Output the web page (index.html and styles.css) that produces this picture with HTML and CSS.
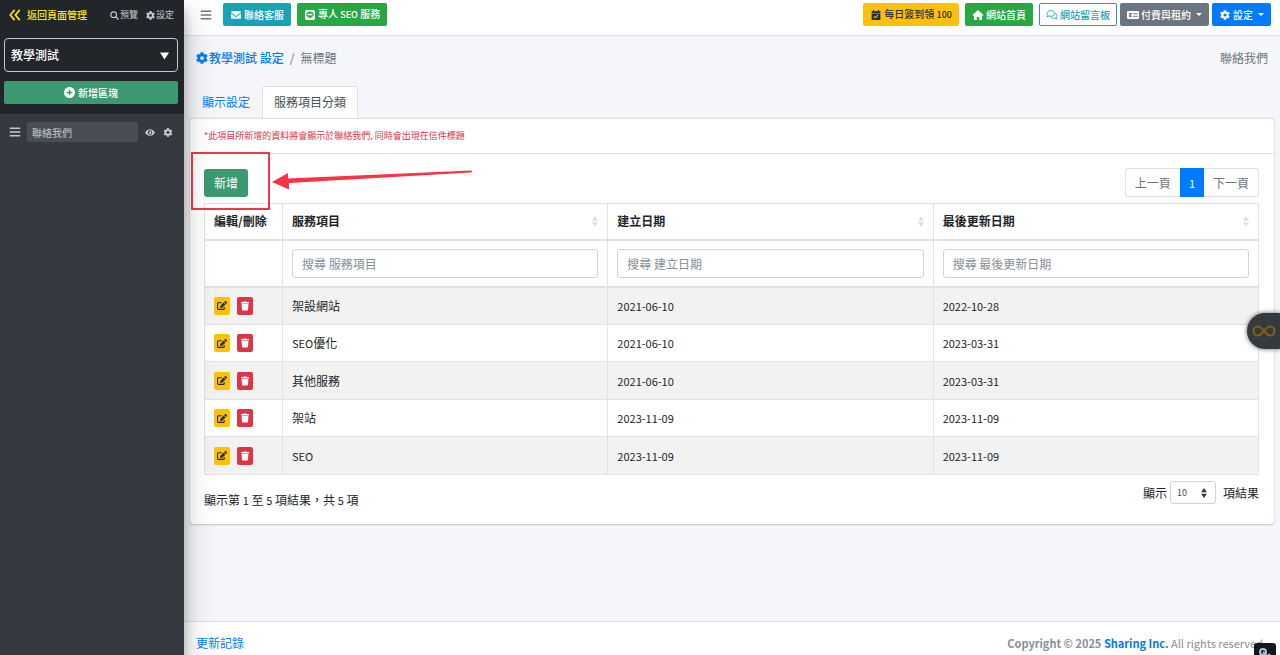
FILE: index.html
```html
<!DOCTYPE html>
<html lang="zh-Hant">
<head>
<meta charset="utf-8">
<title>聯絡我們</title>
<link rel="stylesheet" href="styles.css">
</head>
<body>
<svg class="sprite" aria-hidden="true">
  <symbol id="gear" viewBox="0 0 512 512"><path d="M487 316l-43-25c4-23 4-47 0-70l43-25c5-3 7-9 6-14-11-36-30-69-55-95-4-4-10-5-15-2l-43 24c-18-15-39-27-61-35V25c0-6-4-11-9-12-37-8-75-8-110 0-6 1-10 6-10 12v49c-22 8-43 20-61 35L86 85c-5-3-11-2-15 2-25 27-44 60-55 95-2 5 1 11 6 14l42 25c-4 23-4 47 0 70l-42 25c-5 3-8 9-6 14 11 35 30 68 55 95 4 4 10 5 15 2l43-24c18 15 39 27 61 35v49c0 6 4 11 10 12 36 8 74 8 110 0 5-1 9-6 9-12v-49c22-8 43-20 61-35l43 24c5 3 11 2 15-2 25-27 44-60 55-95 1-5-1-11-6-14zM256 336a80 80 0 1 1 0-160 80 80 0 0 1 0 160z"/></symbol>
  <symbol id="edit" viewBox="0 0 18 16"><path d="M8.500 3H2.700A1.700 1.700 0 0 0 1 4.700v8.600A1.700 1.700 0 0 0 2.700 15h8.600a1.700 1.700 0 0 0 1.700-1.700V10.500" fill="none" stroke="currentColor" stroke-width="2"/><path d="M14.200.5a1.400 1.400 0 0 1 2 0l1.300 1.300a1.400 1.400 0 0 1 0 2l-1.400 1.400-3.300-3.300zM12 2.700L15.300 6l-6.200 6.200-3.600.5.400-3.700z"/></symbol>
  <symbol id="trash" viewBox="0 0 14 16"><path d="M0 1h4l.7-1h4.600L10 1h4v2H0zM1 4h12l-.7 10.600A1.500 1.500 0 0 1 10.800 16H3.200a1.500 1.500 0 0 1-1.500-1.400z"/></symbol>
  <symbol id="bars" viewBox="0 0 16 16"><path d="M1 2h14v2H1zM1 7h14v2H1zM1 12h14v2H1z"/></symbol>
  <symbol id="sort" viewBox="0 0 8 14"><path d="M4 0l4 6H0zM0 8h8l-4 6z"/></symbol>
</svg>

<div class="app">
  <aside class="sidebar">
    <div class="side-top">
      <nav class="side-nav">
        <a class="back" href="#"><svg viewBox="0 0 14 14"><path d="M6.500 1L1.500 7l5 6M12.500 1l-5 6 5 6" fill="none" stroke="currentColor" stroke-width="2"/></svg>返回頁面管理</a>
        <a class="side-link" href="#"><svg viewBox="0 0 16 16"><circle cx="6.500" cy="6.500" r="5" fill="none" stroke="currentColor" stroke-width="2"/><path d="M10 10l5 5" stroke="currentColor" stroke-width="2.500"/></svg>預覽</a>
        <a class="side-link" href="#"><svg><use href="#gear"/></svg>設定</a>
      </nav>
      <div class="site-select">
        <select aria-label="頁面"><option>教學測試</option></select>
        <svg viewBox="0 0 10 8"><path d="M0 0h10L5 8z"/></svg>
      </div>
      <button class="add-block"><svg viewBox="0 0 16 16"><path fill-rule="evenodd" d="M8 0a8 8 0 1 0 0 16A8 8 0 0 0 8 0zM7 4h2v3h3v2H9v3H7V9H4V7h3z"/></svg>新增區塊</button>
    </div>
    <div class="block-row">
      <svg class="drag"><use href="#bars"/></svg>
      <input type="text" value="聯絡我們" aria-label="區塊名稱">
      <button aria-label="顯示"><svg viewBox="0 0 18 14"><path fill-rule="evenodd" d="M9 1C5 1 2 3.500 0 7c2 3.500 5 6 9 6s7-2.500 9-6c-2-3.500-5-6-9-6zm0 2a4 4 0 1 1 0 8 4 4 0 0 1 0-8z"/><path d="M9 4.500a2.500 2.500 0 1 1-2.500 2.500C8 7.500 9 6.500 9 4.500z"/></svg></button>
      <button aria-label="區塊設定"><svg><use href="#gear"/></svg></button>
    </div>
  </aside>

  <div class="main">
    <header class="topbar">
      <button class="menu" aria-label="選單"><svg><use href="#bars"/></svg></button>
      <a class="btn info" href="#"><svg viewBox="0 0 16 16"><path d="M0 3.500A1.500 1.500 0 0 1 1.500 2h13A1.500 1.500 0 0 1 16 3.500L8 9.500 0 3.500zM0 5.500l8 6 8-6v7a1.500 1.500 0 0 1-1.500 1.500h-13A1.500 1.500 0 0 1 0 12.500z"/></svg>聯絡客服</a>
      <a class="btn success" href="#"><svg viewBox="0 0 16 16"><path fill-rule="evenodd" d="M3 0h10a3 3 0 0 1 3 3v10a3 3 0 0 1-3 3H3a3 3 0 0 1-3-3V3a3 3 0 0 1 3-3zm5 2.500C4.700 2.500 2 4.600 2 7.200c0 2.400 2 4.200 5 4.700v2c3.500-1.600 7-4 7-6.700 0-2.600-2.700-4.700-6-4.700z"/><path d="M4 6h8v2.500H4z"/></svg><span>專人 <small>SEO</small> 服務</span></a>
      <div class="top-right">
        <a class="btn warning" href="#"><svg viewBox="0 0 16 16"><path fill-rule="evenodd" d="M3 0h2v2h6V0h2v2h2v3H1V2h2zM1 6h14v10H1zm9.800 1.500L7 11.300 5.200 9.500 4 10.700l3 3 5-5z"/></svg><span>每日簽到領 <small>100</small></span></a>
        <a class="btn success" href="#"><svg viewBox="0 0 18 16"><path d="M9 0l9 8-1.200 1.300L15.500 8.200V15a1 1 0 0 1-1 1H11v-5H7v5H3.500a1 1 0 0 1-1-1V8.200L1.200 9.300 0 8z"/></svg>網站首頁</a>
        <a class="btn outline" href="#"><svg viewBox="0 0 18 16"><g fill="none" stroke="currentColor" stroke-width="1.400"><path d="M7 1c3.400 0 6 2 6 4.500S10.400 10 7 10c-1 0-1.800-.1-2.600-.4L1 11c.7-.8 1.100-1.600 1.200-2.500C1.400 7.700 1 6.600 1 5.500 1 3 3.600 1 7 1z"/><path d="M14 5.500c1.800.6 3 2 3 3.800 0 1-.4 1.800-1.100 2.500.1 1 .5 1.700 1.100 2.500l-3.200-1.200c-3 .8-5.800-.2-7-2.300"/></g></svg>網站留言板</a>
        <button class="btn secondary"><svg viewBox="0 0 18 14"><path fill-rule="evenodd" d="M1.500 1h15A1.500 1.500 0 0 1 18 2.500v9a1.500 1.500 0 0 1-1.500 1.500h-15A1.500 1.500 0 0 1 0 11.500v-9A1.500 1.500 0 0 1 1.500 1zM3 4v2h1.500v1H3v3h4V8H5.500V7H7V4zm6 .5V6h7V4.500zM9 8v1.500h7V8z"/></svg>付費與租約<i class="caret"></i></button>
        <button class="btn primary"><svg><use href="#gear"/></svg>設定<i class="caret"></i></button>
      </div>
    </header>

    <main class="content">
      <div class="crumbs">
        <a href="#"><svg><use href="#gear"/></svg>教學測試 設定</a><span class="slash">/</span><span>無標題</span>
        <span class="page-name">聯絡我們</span>
      </div>
      <nav class="tabs">
        <a href="#">顯示設定</a>
        <a class="active" href="#">服務項目分類</a>
      </nav>
      <section class="card">
        <p class="notice">*此項目所新增的資料將會顯示於聯絡我們, 同時會出現在信件標題</p>
        <div class="card-body">
          <div class="toolbar">
            <div class="add-wrap">
              <button class="add">新增</button>
              <div class="mark"></div>
              <svg class="arrow" viewBox="0 0 200 22"><path d="M199 1.500a1 1 0 0 1 0 2L17 14v6.500L0 13 16 4v5.500z"/></svg>
            </div>
            <nav class="pager"><a href="#">上一頁</a><a class="current" href="#">1</a><a href="#">下一頁</a></nav>
          </div>
          <table>
            <thead>
              <tr><th class="ops">編輯/刪除</th><th><div class="head">服務項目<svg><use href="#sort"/></svg></div></th><th><div class="head">建立日期<svg><use href="#sort"/></svg></div></th><th><div class="head">最後更新日期<svg><use href="#sort"/></svg></div></th></tr>
              <tr class="filters"><td></td><td><input type="text" placeholder="搜尋 服務項目" aria-label="搜尋 服務項目"></td><td><input type="text" placeholder="搜尋 建立日期" aria-label="搜尋 建立日期"></td><td><input type="text" placeholder="搜尋 最後更新日期" aria-label="搜尋 最後更新日期"></td></tr>
            </thead>
            <tbody>
              <tr><td><div class="actions"><button class="edit" aria-label="編輯"><svg><use href="#edit"/></svg></button><button class="del" aria-label="刪除"><svg><use href="#trash"/></svg></button></div></td><td>架設網站</td><td class="latin">2021-06-10</td><td class="latin">2022-10-28</td></tr>
              <tr><td><div class="actions"><button class="edit" aria-label="編輯"><svg><use href="#edit"/></svg></button><button class="del" aria-label="刪除"><svg><use href="#trash"/></svg></button></div></td><td><span class="latin">SEO</span>優化</td><td class="latin">2021-06-10</td><td class="latin">2023-03-31</td></tr>
              <tr><td><div class="actions"><button class="edit" aria-label="編輯"><svg><use href="#edit"/></svg></button><button class="del" aria-label="刪除"><svg><use href="#trash"/></svg></button></div></td><td>其他服務</td><td class="latin">2021-06-10</td><td class="latin">2023-03-31</td></tr>
              <tr><td><div class="actions"><button class="edit" aria-label="編輯"><svg><use href="#edit"/></svg></button><button class="del" aria-label="刪除"><svg><use href="#trash"/></svg></button></div></td><td>架站</td><td class="latin">2023-11-09</td><td class="latin">2023-11-09</td></tr>
              <tr><td><div class="actions"><button class="edit" aria-label="編輯"><svg><use href="#edit"/></svg></button><button class="del" aria-label="刪除"><svg><use href="#trash"/></svg></button></div></td><td class="latin">SEO</td><td class="latin">2023-11-09</td><td class="latin">2023-11-09</td></tr>
            </tbody>
          </table>
          <div class="table-foot">
            <span class="summary">顯示第 <span class="latin">1</span> 至 <span class="latin">5</span> 項結果，共 <span class="latin">5</span> 項</span>
            <label class="length">顯示<span class="length-box"><select><option>10</option></select><svg><use href="#sort"/></svg></span>項結果</label>
          </div>
        </div>
      </section>
    </main>

    <footer class="footer">
      <a href="#">更新記錄</a>
      <div class="copy"><b>Copyright © 2025 <a href="#">Sharing Inc.</a></b> All rights reserved.</div>
    </footer>
  </div>
</div>
<button class="float-tab" aria-label="快捷工具"><svg viewBox="0 0 24 12"><path fill="none" stroke="currentColor" stroke-width="2.200" d="M12 6C9.500 3 8.200 1.500 6 1.500a4.500 4.500 0 0 0 0 9c2.200 0 3.500-1.500 6-4.500s3.800-4.500 6-4.500a4.500 4.500 0 0 1 0 9c-2.200 0-3.500-1.500-6-4.500z"/></svg></button>
<button class="corner" aria-label="連結"><svg viewBox="0 0 14 14"><g fill="none" stroke="currentColor" stroke-width="2"><circle cx="5" cy="5" r="3"/><path d="M5 5l6 6M12 7l-5 5"/></g></svg></button>
</body>
</html>
```
FILE: styles.css
```css
* { box-sizing: border-box; }
body {
  margin: 0;
  overflow: hidden;
  font: 12px/18px "Noto Sans CJK TC", sans-serif;
  color: #212529;
  background: #f4f6f9;
}
a { color: #007bff; text-decoration: none; }
button, input, select { font: inherit; color: inherit; margin: 0; padding: 0; border: 0; }
button { cursor: pointer; background: none; }
select { appearance: none; }
svg { fill: currentColor; flex: none; }
.sprite { position: absolute; width: 0; height: 0; }
.latin { font-size: 11px; }

.app { display: flex; height: 100vh; }

/* Sidebar */
.sidebar {
  flex: 0 0 184px;
  min-width: 0;
  z-index: 1;
  background: #343a40;
  color: #c2c7d0;
  box-shadow: 0 14px 28px rgba(0, 0, 0, .25), 0 10px 10px rgba(0, 0, 0, .22);
}
.side-top { background: #22252a; padding: 0 6px 10px 4px; border-bottom: 1px solid #3d4349; }
.side-nav { display: flex; align-items: center; height: 38px; padding: 0 4px 8px 5px; gap: 8px; white-space: nowrap; }
.side-nav a { display: flex; align-items: center; }
.side-nav .back { color: #fce21b; font-size: 10px; font-weight: 500; gap: 6px; margin-right: auto; }
.back svg { width: 12px; height: 12px; }
.side-nav .side-link { color: #c2c7d0; font-size: 9px; }
.side-link svg { width: 9px; height: 9px; margin-right: 1px; }
.site-select { position: relative; }
.site-select select {
  display: block;
  width: 100%;
  height: 34px;
  padding: 0 6px;
  font-weight: 500;
  color: #fff;
  background: #22252a;
  border: 1px solid #c2c7d0;
  border-radius: 4px;
}
.site-select svg { position: absolute; right: 9px; top: 14px; width: 9px; height: 8px; color: #fff; pointer-events: none; }
.add-block {
  display: flex;
  align-items: center;
  justify-content: center;
  gap: 3px;
  width: 100%;
  height: 23px;
  margin-top: 9px;
  font-size: 10px;
  font-weight: 500;
  color: #fff;
  background: #3d9970;
  border-radius: 2px;
}
.add-block svg { width: 11px; height: 11px; }
.block-row { display: flex; align-items: center; padding: 7px 11px 0 9px; }
.block-row .drag { width: 12px; height: 14px; margin-right: 6px; }
.block-row input {
  flex: 1;
  min-width: 0;
  height: 20px;
  padding: 0 5px;
  margin-right: 7px;
  font-size: 10px;
  background: #494e54;
  border-radius: 2px;
}
.block-row button { display: flex; }
.block-row button + button { margin-left: 8px; }
.block-row button svg { width: 10px; height: 9px; }

/* Top bar */
.main { flex: 1; min-width: 0; display: flex; flex-direction: column; }
.topbar {
  display: flex;
  align-items: center;
  gap: 6px;
  height: 36px;
  padding: 0 9px 6px 16px;
  background: #fff;
  border-bottom: 1px solid #dee2e6;
}
.menu { display: flex; color: #6c757d; margin-right: 5px; }
.menu svg { width: 12px; height: 12px; }
.btn {
  display: flex;
  align-items: center;
  gap: 2px;
  height: 23px;
  padding: 0 6px;
  font-size: 10px;
  font-weight: 500;
  white-space: nowrap;
  color: #fff;
  border: 1px solid transparent;
  border-radius: 2px;
}
.btn small { font-size: 9px; }
.btn svg { width: 12px; height: 10px; }
.top-right { display: flex; gap: 6px; margin-left: auto; }
.info { background: #17a2b8; }
.success { background: #28a745; }
.warning { background: #ffc107; color: #1f2d3d; }
.outline { color: #17a2b8; border-color: #17a2b8; }
.secondary { background: #6c757d; margin-left: -3px; }
.primary { background: #007bff; margin-left: -3px; }
.caret { border: 3px solid transparent; border-top-color: currentColor; border-bottom: 0; margin-left: 3px; }

/* Page content */
.content { flex: 1; padding: 0 6px; }
.crumbs { display: flex; align-items: center; height: 44px; padding: 0 6px; color: #6c757d; }
.crumbs a { display: flex; align-items: center; gap: 1px; font-weight: 500; }
.crumbs svg { width: 12px; height: 12px; }
.slash { margin: 0 6px; }
.page-name { margin-left: auto; }
.tabs { display: flex; margin-top: 6px; }
.tabs a { height: 32px; padding: 6px 11px; border: 1px solid transparent; border-bottom: 0; border-radius: 3px 3px 0 0; }
.tabs .active { position: relative; color: #495057; background: #fff; border-color: #dee2e6; margin-bottom: -1px; }
.card {
  background: #fff;
  border-top: 1px solid #dee2e6;
  border-radius: 3px;
  box-shadow: 0 0 1px rgba(0, 0, 0, .25), 0 1px 2px rgba(0, 0, 0, .2);
}
.notice { margin: 0; padding: 8px 14px; font-size: 9px; color: #dc3545; border-bottom: 1px solid #dfe2e5; }
.card-body { padding: 14px 15px 15px 14px; }
.toolbar { display: flex; justify-content: space-between; align-items: center; margin-bottom: 6px; }
.add-wrap { position: relative; }
.add { display: block; height: 28px; padding: 0 10px; color: #fff; background: #3d9970; border-radius: 3px; }
.mark { position: absolute; left: -13px; top: -17px; width: 79px; height: 58px; border: 2px solid #f0384a; }
.arrow { position: absolute; left: 68px; top: 0; width: 200px; height: 22px; color: #f63444; }
.pager { display: flex; }
.pager a { height: 29px; padding: 5px 9px; color: #6c757d; border: 1px solid #dee2e6; }
.pager a:first-child { border-radius: 3px 0 0 3px; border-right: 0; }
.pager a:last-child { border-radius: 0 3px 3px 0; border-left: 0; }
.pager .current { padding: 5px 8px; font-size: 11px; color: #fff; background: #007bff; border-color: #007bff; }

table { width: 100%; table-layout: fixed; border-collapse: collapse; }
th, td { padding: 0 9px; border: 1px solid #dee2e6; text-align: left; }
thead th { height: 36px; border-bottom-width: 2px; }
.ops { width: 78px; white-space: nowrap; }
.head { display: flex; align-items: center; justify-content: space-between; }
.head svg { width: 6px; height: 13px; color: #dcdee0; }
.filters td { height: 47px; border-bottom-width: 2px; }
.filters td input { display: block; width: 100%; height: 29px; padding: 0 9px; border: 1px solid #ced4da; border-radius: 3px; }
input::placeholder { color: #868e96; opacity: 1; }
tbody td { height: 38px; }
tbody tr:nth-child(even) td { height: 37px; }
tbody tr:nth-child(odd) { background: #f2f2f2; }
.actions { display: flex; gap: 7px; }
.actions button { display: grid; place-items: center; width: 16px; height: 18px; border-radius: 2px; }
.edit { background: #ffc107; color: #1f2d3d; }
.edit svg { width: 10px; height: 9px; }
.del { background: #dc3545; color: #fff; }
.del svg { width: 8px; height: 10px; }
.table-foot { display: flex; justify-content: space-between; align-items: flex-start; padding-top: 6px; }
.summary { padding-top: 10px; }
.length { display: flex; align-items: center; }
.length-box { position: relative; margin: 0 7px 0 3px; }
.length select { display: block; width: 46px; height: 23px; padding: 0 6px; font-size: 9px; color: #495057; border: 1px solid #ced4da; border-radius: 3px; background: #fff; }
.length svg { position: absolute; right: 9px; top: 7px; width: 6px; height: 10px; color: #343a40; pointer-events: none; }

.footer {
  display: flex;
  justify-content: space-between;
  height: 34px;
  padding: 12px 14px 0 12px;
  color: #869099;
  background: #fff;
  border-top: 1px solid #dee2e6;
}
.copy { font-size: 11px; }

/* Floating controls */
.float-tab {
  position: fixed;
  right: 0;
  top: 313px;
  z-index: 2;
  display: flex;
  align-items: center;
  width: 33px;
  height: 36px;
  padding-left: 5px;
  color: #806016;
  background: #343a40;
  border-radius: 18px 0 0 18px;
  box-shadow: 0 0 5px rgba(0, 0, 0, .6);
}
.float-tab svg { width: 24px; height: 12px; }
.corner {
  position: fixed;
  right: 4px;
  bottom: -8px;
  z-index: 2;
  width: 22px;
  height: 20px;
  padding: 4px;
  color: #9fc3e0;
  background: #15181b;
  border-radius: 3px;
}
.corner svg { display: block; width: 14px; height: 14px; }
```
